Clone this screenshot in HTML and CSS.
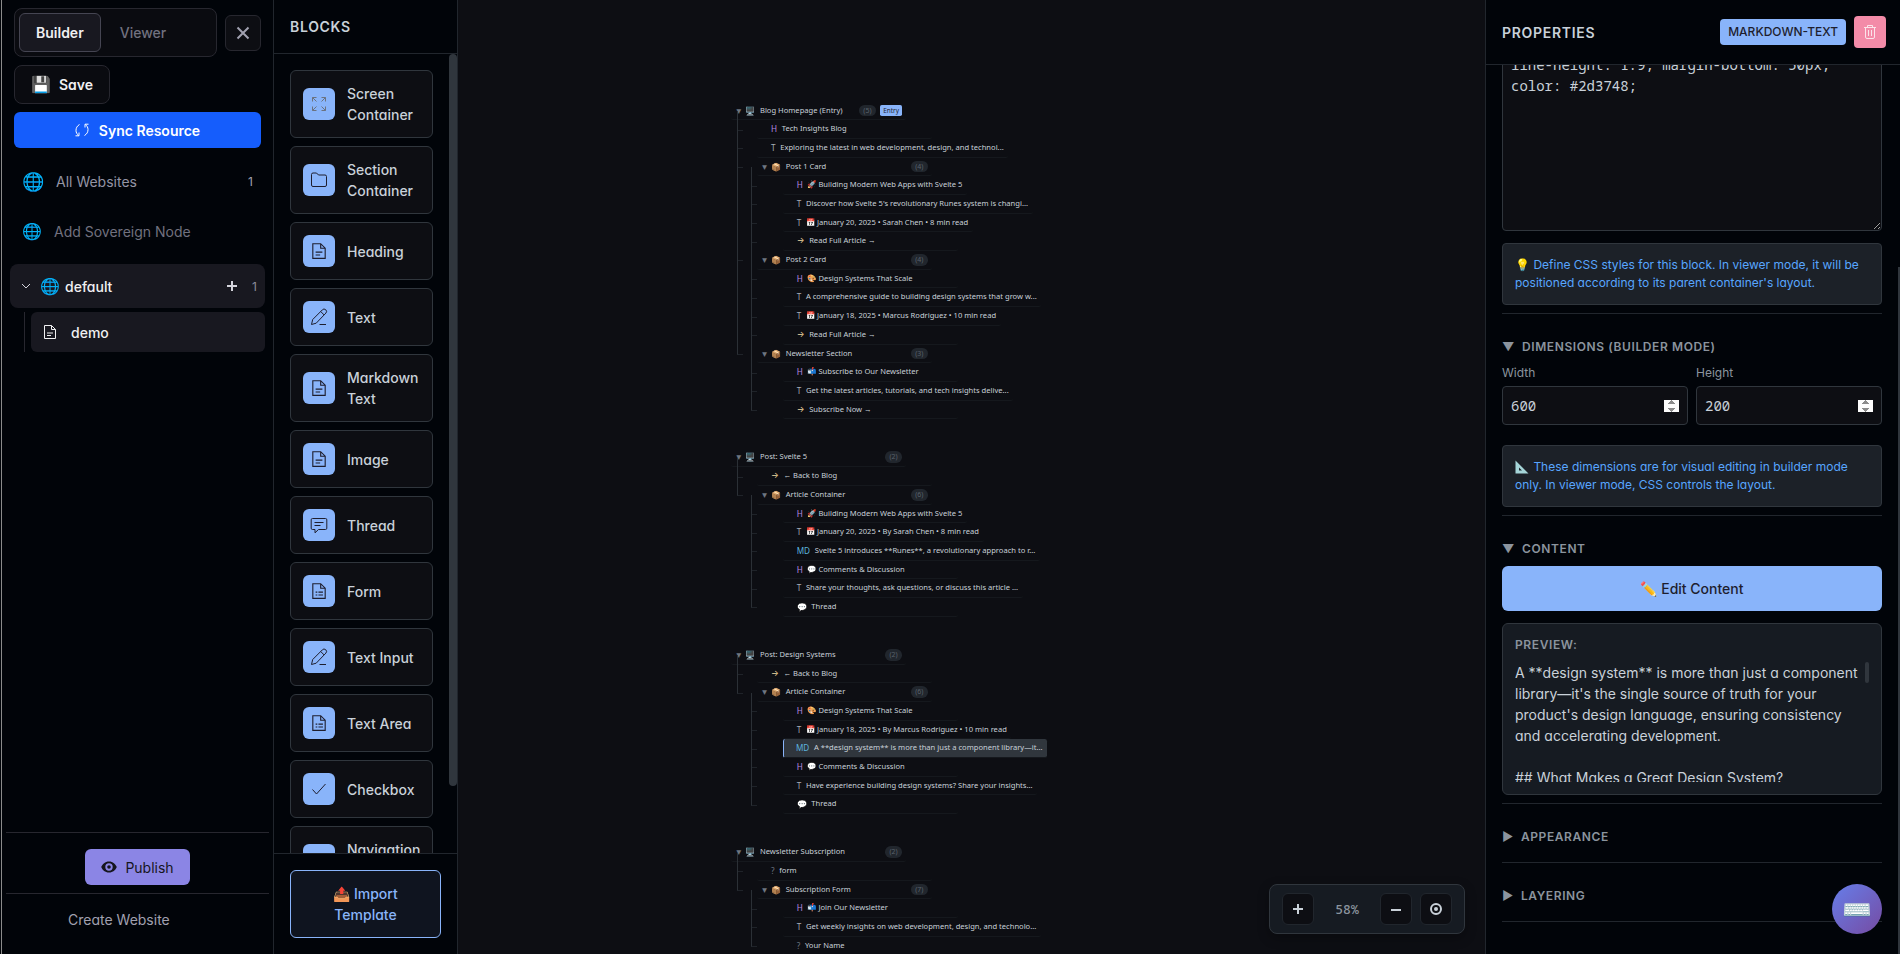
FILE: index.html
```html
<!DOCTYPE html>
<html lang="en">
<head>
  <meta charset="UTF-8" />
  <meta name="viewport" content="width=device-width, initial-scale=1.0"/>
  <title>Website Builder</title>
  <link rel="stylesheet" href="styles.css">
</head>
<body>

<svg class="sprite" aria-hidden="true">
  <symbol id="i-doc" viewBox="0 0 16 16"><path d="M2.5 1.5h7l4 4v9h-11zM9.5 1.5v4h4M5 9h6M5 11.5h4"/></symbol>
  <symbol id="i-form" viewBox="0 0 16 16"><path d="M2.5 1.5h7l4 4v9h-11zM9.5 1.5v4h4M5 9h1.5M7.5 9h4M5 11.5h1.5M7.5 11.5h4"/></symbol>
  <symbol id="i-expand" viewBox="0 0 16 16"><path d="M1.5 5.500v-4h4M1.500 1.500l4 4M10.500 1.500h4v4M14.500 1.500l-4 4M1.500 10.500v4h4M1.500 14.500l4-4M10.500 14.500h4v-4M14.500 14.500l-4-4"/></symbol>
  <symbol id="i-folder" viewBox="0 0 18 16"><path d="M1.500 13V2.500a1.500 1.500 0 0 1 1.500-1.500h3.500l2 2H15a1.500 1.500 0 0 1 1.500 1.500V13a1.500 1.500 0 0 1-1.500 1.500H3A1.500 1.500 0 0 1 1.500 13z"/></symbol>
  <symbol id="i-pen" viewBox="0 0 18 18"><path d="M1.500 16.500l1.200-5L12.300 1.900a2.300 2.300 0 0 1 3.600 3.200L6.200 15.200zM10.800 3.600l3.400 3.400M9.500 16.500H16"/></symbol>
  <symbol id="i-chat" viewBox="0 0 18 17"><path d="M2.500 1.500h13a1.300 1.300 0 0 1 1.300 1.300v8.400a1.300 1.300 0 0 1-1.300 1.300H8.500L5 15.800v-3.300H2.500a1.300 1.300 0 0 1-1.300-1.300V2.800a1.300 1.300 0 0 1 1.300-1.300zM4.500 5.500h9M4.500 8.500h6"/></symbol>
  <symbol id="i-check" viewBox="0 0 16 16"><path d="M1.500 8.500l4 4.500L14.500 3"/></symbol>
</svg>

<div class="app">

  <aside class="sidebar">
    <div class="topbar">
      <div class="modes">
        <button class="active">Builder</button>
        <button>Viewer</button>
      </div>
      <button class="close" aria-label="Close">
        <svg width="14" height="14" viewBox="0 0 14 14"><path d="M1.500 1.500l11 11M12.500 1.500l-11 11"/></svg>
      </button>
    </div>
    <button class="save"><span class="emoji">💾</span>Save</button>
    <button class="sync">
      <svg width="14" height="14" viewBox="0 0 14 14"><path d="M4.500 1.500C2 3 1 5 1 7.500c0 2 1 3.500 2.500 5M.500 12.800h3.500V9.500M9.500 12.500C12 11 13 9 13 6.500c0-2-1-3.500-2.500-5M13.500 1.200H10v3.300"/></svg>
      Sync Resource
    </button>

    <nav class="sites">
      <a href="#" class="site all"><span class="globe">🌐</span>All Websites<span class="num">1</span></a>
      <a href="#" class="site add"><span class="globe">🌐</span>Add Sovereign Node</a>
      <div class="site-root">
        <svg width="10" height="6" viewBox="0 0 10 6"><path d="M1 1l4 4 4-4"/></svg>
        <span class="globe">🌐</span>
        <a href="#">default</a>
        <button aria-label="Add page"><svg width="12" height="12" viewBox="0 0 12 12"><path d="M6 1v10M1 6h10"/></svg></button>
        <span class="num">1</span>
      </div>
      <div class="pages">
        <a href="#" class="page"><svg width="16" height="16"><use href="#i-doc"/></svg>demo</a>
      </div>
    </nav>

    <div class="side-foot">
      <div class="publish-row">
        <button class="publish">
          <svg width="16" height="12" viewBox="0 0 16 12"><path fill-rule="evenodd" d="M8 .500c4 0 6.500 2.500 7.800 5.500C14.500 9 12 11.500 8 11.500S1.500 9 .200 6C1.500 3 4 .500 8 .500zM8 2.300a3.700 3.700 0 1 0 0 7.400 3.700 3.700 0 0 0 0-7.400zM8 4.200a1.800 1.800 0 1 1 0 3.600 1.800 1.800 0 0 1 0-3.600z"/></svg>
          Publish
        </button>
      </div>
      <a href="#" class="create">Create Website</a>
    </div>
  </aside>

  <section class="blocks">
    <h2>Blocks</h2>
    <div class="block-area">
      <div class="block-list">
        <button class="block"><span class="tile faded"><svg width="16" height="16"><use href="#i-expand"/></svg></span>Screen Container</button>
        <button class="block"><span class="tile"><svg width="18" height="16"><use href="#i-folder"/></svg></span>Section Container</button>
        <button class="block"><span class="tile"><svg width="18" height="18"><use href="#i-doc"/></svg></span>Heading</button>
        <button class="block"><span class="tile"><svg width="18" height="18"><use href="#i-pen"/></svg></span>Text</button>
        <button class="block"><span class="tile"><svg width="18" height="18"><use href="#i-doc"/></svg></span>Markdown Text</button>
        <button class="block"><span class="tile"><svg width="18" height="18"><use href="#i-doc"/></svg></span>Image</button>
        <button class="block"><span class="tile"><svg width="18" height="17"><use href="#i-chat"/></svg></span>Thread</button>
        <button class="block"><span class="tile"><svg width="18" height="18"><use href="#i-form"/></svg></span>Form</button>
        <button class="block"><span class="tile"><svg width="18" height="18"><use href="#i-pen"/></svg></span>Text Input</button>
        <button class="block"><span class="tile"><svg width="18" height="18"><use href="#i-form"/></svg></span>Text Area</button>
        <button class="block"><span class="tile"><svg width="16" height="16"><use href="#i-check"/></svg></span>Checkbox</button>
        <button class="block"><span class="tile"></span>Navigation Menu</button>
      </div>
      <div class="thumb"></div>
    </div>
    <div class="import">
      <button>📤 Import Template</button>
    </div>
  </section>

  <main class="canvas">
    <div class="tree">
      <ul class="screen">
        <li>
          <div class="row"><i class="tw">▼</i><span class="ic">🖥️</span><span class="name">Blog Homepage (Entry)</span><span class="count">(5)</span><span class="entry">Entry</span></div>
          <ul>
            <li><div class="row leaf"><span class="ic h">H</span>Tech Insights Blog</div></li>
            <li><div class="row leaf"><span class="ic">T</span>Exploring the latest in web development, design, and technol...</div></li>
            <li>
              <div class="row"><i class="tw">▼</i><span class="ic">📦</span><span class="name">Post 1 Card</span><span class="count">(4)</span></div>
              <ul>
                <li><div class="row leaf"><span class="ic h">H</span>🚀 Building Modern Web Apps with Svelte 5</div></li>
                <li><div class="row leaf"><span class="ic">T</span>Discover how Svelte 5's revolutionary Runes system is changi...</div></li>
                <li><div class="row leaf"><span class="ic">T</span>📅 January 20, 2025 • Sarah Chen • 8 min read</div></li>
                <li><div class="row leaf"><span class="ic b">→</span>Read Full Article →</div></li>
              </ul>
            </li>
            <li>
              <div class="row"><i class="tw">▼</i><span class="ic">📦</span><span class="name">Post 2 Card</span><span class="count">(4)</span></div>
              <ul>
                <li><div class="row leaf"><span class="ic h">H</span>🎨 Design Systems That Scale</div></li>
                <li><div class="row leaf"><span class="ic">T</span>A comprehensive guide to building design systems that grow w...</div></li>
                <li><div class="row leaf"><span class="ic">T</span>📅 January 18, 2025 • Marcus Rodriguez • 10 min read</div></li>
                <li><div class="row leaf"><span class="ic b">→</span>Read Full Article →</div></li>
              </ul>
            </li>
            <li>
              <div class="row"><i class="tw">▼</i><span class="ic">📦</span><span class="name">Newsletter Section</span><span class="count">(3)</span></div>
              <ul>
                <li><div class="row leaf"><span class="ic h">H</span>📬 Subscribe to Our Newsletter</div></li>
                <li><div class="row leaf"><span class="ic">T</span>Get the latest articles, tutorials, and tech insights delive...</div></li>
                <li><div class="row leaf"><span class="ic b">→</span>Subscribe Now →</div></li>
              </ul>
            </li>
          </ul>
        </li>
      </ul>

      <ul class="screen">
        <li>
          <div class="row"><i class="tw">▼</i><span class="ic">🖥️</span><span class="name">Post: Svelte 5</span><span class="count">(2)</span></div>
          <ul>
            <li><div class="row leaf"><span class="ic b">→</span>← Back to Blog</div></li>
            <li>
              <div class="row"><i class="tw">▼</i><span class="ic">📦</span><span class="name">Article Container</span><span class="count">(6)</span></div>
              <ul>
                <li><div class="row leaf"><span class="ic h">H</span>🚀 Building Modern Web Apps with Svelte 5</div></li>
                <li><div class="row leaf"><span class="ic">T</span>📅 January 20, 2025 • By Sarah Chen • 8 min read</div></li>
                <li><div class="row leaf"><span class="ic md">MD</span>Svelte 5 introduces **Runes**, a revolutionary approach to r...</div></li>
                <li><div class="row leaf"><span class="ic h">H</span>💬 Comments &amp; Discussion</div></li>
                <li><div class="row leaf"><span class="ic">T</span>Share your thoughts, ask questions, or discuss this article ...</div></li>
                <li><div class="row leaf"><span class="ic">💬</span>Thread</div></li>
              </ul>
            </li>
          </ul>
        </li>
      </ul>

      <ul class="screen">
        <li>
          <div class="row"><i class="tw">▼</i><span class="ic">🖥️</span><span class="name">Post: Design Systems</span><span class="count">(2)</span></div>
          <ul>
            <li><div class="row leaf"><span class="ic b">→</span>← Back to Blog</div></li>
            <li>
              <div class="row"><i class="tw">▼</i><span class="ic">📦</span><span class="name">Article Container</span><span class="count">(6)</span></div>
              <ul>
                <li><div class="row leaf"><span class="ic h">H</span>🎨 Design Systems That Scale</div></li>
                <li><div class="row leaf"><span class="ic">T</span>📅 January 18, 2025 • By Marcus Rodriguez • 10 min read</div></li>
                <li><div class="row leaf selected"><span class="ic md">MD</span>A **design system** is more than just a component library—it...</div></li>
                <li><div class="row leaf"><span class="ic h">H</span>💬 Comments &amp; Discussion</div></li>
                <li><div class="row leaf"><span class="ic">T</span>Have experience building design systems? Share your insights...</div></li>
                <li><div class="row leaf"><span class="ic">💬</span>Thread</div></li>
              </ul>
            </li>
          </ul>
        </li>
      </ul>

      <ul class="screen">
        <li>
          <div class="row"><i class="tw">▼</i><span class="ic">🖥️</span><span class="name">Newsletter Subscription</span><span class="count">(2)</span></div>
          <ul>
            <li><div class="row leaf"><span class="ic q">?</span>form</div></li>
            <li>
              <div class="row"><i class="tw">▼</i><span class="ic">📦</span><span class="name">Subscription Form</span><span class="count">(7)</span></div>
              <ul>
                <li><div class="row leaf"><span class="ic h">H</span>📬 Join Our Newsletter</div></li>
                <li><div class="row leaf"><span class="ic">T</span>Get weekly insights on web development, design, and technolo...</div></li>
                <li><div class="row leaf"><span class="ic q">?</span>Your Name</div></li>
              </ul>
            </li>
          </ul>
        </li>
      </ul>
    </div>

    <div class="zoom-bar">
      <button aria-label="Zoom in"><svg width="10" height="10" viewBox="0 0 10 10"><path d="M5 0v10M0 5h10"/></svg></button>
      <span>58%</span>
      <button aria-label="Zoom out"><svg width="10" height="10" viewBox="0 0 10 10"><path d="M0 6h10"/></svg></button>
      <button aria-label="Fit to screen"><svg width="12" height="12" viewBox="0 0 12 12"><circle cx="6" cy="6" r="5"/><circle class="dot" cx="6" cy="6" r="2"/></svg></button>
    </div>
  </main>

  <aside class="props">
    <header>
      <h2>Properties</h2>
      <span class="tag">MARKDOWN-TEXT</span>
      <button class="delete" aria-label="Delete block">
        <svg width="14" height="16" viewBox="0 0 14 16"><path d="M1 3.500h12M4.500 3.500V1.500h5v2M2.500 3.500v9.500a1.500 1.500 0 0 0 1.500 1.500h6a1.500 1.500 0 0 0 1.500-1.500V3.500M5.500 6v6M8.500 6v6"/></svg>
      </button>
    </header>

    <div class="props-body">
      <div class="css-block">
        <textarea aria-label="Custom CSS" spellcheck="false">line-height: 1.9; margin-bottom: 50px;
color: #2d3748;</textarea>
        <p class="hint">💡 Define CSS styles for this block. In viewer mode, it will be positioned according to its parent container's layout.</p>
      </div>

      <details open>
        <summary>Dimensions (Builder Mode)</summary>
        <div class="dims">
          <label>Width<input type="number" value="600"></label>
          <label>Height<input type="number" value="200"></label>
        </div>
        <p class="hint"><svg class="ruler" width="14" height="14" viewBox="0 0 14 14"><path fill-rule="evenodd" d="M.500.500v13h13zM4 7.500v3h3z"/></svg> These dimensions are for visual editing in builder mode only. In viewer mode, CSS controls the layout.</p>
      </details>

      <details open>
        <summary>Content</summary>
        <button class="edit">✏️ Edit Content</button>
        <div class="preview">
          <h4>Preview:</h4>
          <div class="preview-text">A **design system** is more than just a component library—it's the single source of truth for your product's design language, ensuring consistency and accelerating development.

## What Makes a Great Design System?</div>
        </div>
      </details>

      <details>
        <summary>Appearance</summary>
      </details>

      <details>
        <summary>Layering</summary>
      </details>
    </div>
    <div class="thumb"></div>
    <button class="fab" aria-label="Keyboard shortcuts">⌨️</button>
  </aside>

</div>

</body>
</html>
```

FILE: styles.css
```css
* { margin: 0; padding: 0; box-sizing: border-box; }
body {
  font-family: Inter, sans-serif; font-size: 14px; line-height: 21px;
  font-feature-settings: 'cv11'; background: #010409; color: #c9d1d9;
}
button, input, textarea { font: inherit; font-feature-settings: inherit; color: inherit; cursor: pointer; }
a { color: inherit; text-decoration: none; }
ul { list-style: none; }
h2 { font-size: 14px; font-weight: 600; letter-spacing: 0.05em; text-transform: uppercase; }
svg { fill: none; stroke: currentColor; flex: none; }
.sprite { position: absolute; width: 0; height: 0; }

.app {
  display: grid; grid-template-columns: 272px 184px minmax(0, 1fr) 415px;
  height: 100vh; overflow: hidden; margin-left: 1px; border-left: 1px solid #8b8b8b;
}

/* sidebar */
.sidebar { display: flex; flex-direction: column; border-right: 1px solid #21262d; padding-top: 8px; }
.topbar { display: flex; align-items: center; gap: 8px; padding: 0 12px; }
.modes { flex: 1; display: flex; gap: 2px; padding: 4px; border: 1px solid #27272f; border-radius: 8px; background: #0a0b10; }
.modes button {
  padding: 8px 16px; height: 39px; border: 1px solid transparent; border-radius: 6px;
  background: none; color: #71717f; font-weight: 500;
}
.modes .active { background: #181820; border-color: #454552; color: #f0f0f2; font-weight: 600; }
.close {
  width: 36px; height: 36px; border: 1px solid #27272f; border-radius: 6px;
  background: #0d0e13; color: #a1a1b0; display: grid; place-items: center;
}
.close svg { stroke-width: 2; }
.save {
  align-self: flex-start; display: flex; align-items: center; gap: 8px; height: 39px; margin: 8px 12px;
  padding: 0 16px; border: 1px solid #27272f; border-radius: 8px; background: #0a0b10; color: #f0f0f2; font-weight: 600;
}
.save .emoji { font-size: 16px; }
.sync {
  display: flex; align-items: center; justify-content: center; gap: 10px; height: 36px; margin: 0 12px;
  border: none; border-radius: 6px; background: #155dfc; color: #fff; font-weight: 600;
}
.globe { font-size: 16px; }
.sites { flex: 1; padding: 8px 8px 0; }
.site { display: flex; align-items: center; height: 50px; padding: 0 12px; color: #9494a4; }
.all .globe { font-size: 18px; margin-right: 12px; }
.add { color: #71717f; margin-bottom: 8px; }
.add .globe { margin-right: 12px; }
.num { margin-left: auto; font-size: 12px; color: #a1a1b0; }
.site-root { display: flex; align-items: center; height: 44px; padding: 0 8px 0 11px; border-radius: 8px; background: #181820; color: #d4d4dc; }
.site-root .globe { margin: 0 5px 0 9px; }
.site-root a { flex: 1; font-weight: 500; color: #f0f0f2; }
.site-root button { border: none; background: none; display: grid; margin-right: 14px; }
.site-root .num { margin: 0; color: #8b8b9b; }
.site-root button svg { stroke-width: 2; }
.pages { margin: 4px 0 0 14px; border-left: 1px solid #27272f; padding-left: 6px; }
.page {
  display: flex; align-items: center; gap: 13px; height: 40px; padding-left: 11px;
  border-radius: 6px; background: #181820; color: #f0f0f2; font-weight: 500;
}
.side-foot { margin: 0 4px; }
.publish-row { display: flex; justify-content: center; padding: 16px 0 8px; border-top: 1px solid #27272f; }
.publish {
  display: flex; align-items: center; gap: 8px; height: 36px; padding: 0 16px;
  border: none; border-radius: 6px; background: #8b85e5; color: #16161e;
}
.publish svg { fill: currentColor; stroke: none; }
.create { display: block; padding: 15px 62px 24px; border-top: 1px solid #27272f; color: #a1a1b0; }

/* blocks */
.blocks { display: flex; flex-direction: column; min-height: 0; border-right: 1px solid #21262d; }
.blocks h2 { padding: 16px; border-bottom: 1px solid #21262d; }
.block-area { flex: 1; min-height: 0; position: relative; overflow: hidden; }
.block-list { display: flex; flex-direction: column; gap: 8px; padding: 16px 24px 0 16px; }
.block {
  display: flex; align-items: center; gap: 12px; padding: 12px; text-align: left;
  border: 1px solid #30363d; border-radius: 6px; background: #0d0e13; font-weight: 500;
}
.tile {
  flex: none; width: 32px; height: 32px; border-radius: 6px; background: #89b4fa;
  color: #1e1e2e; display: grid; place-items: center;
}
.tile.faded { color: #6b7280; }
.thumb { position: absolute; right: 0; background: #30363d; border-radius: 4px; }
.block-area .thumb { top: 0; width: 8px; height: 91.6%; }
.import { padding: 16px; border-top: 1px solid #21262d; }
.import button {
  width: 100%; padding: 12px 32px; border: 1px solid #89b4fa; border-radius: 6px;
  background: #0f141f; color: #89b4fa; font-weight: 500;
}

/* canvas: the tree is laid out at 100% and shown at the current zoom level */
.canvas { position: relative; overflow: hidden; background: #0d0e13; }
.tree {
  zoom: 0.584; display: flex; flex-direction: column; gap: 50px; padding: 174px 0 0 468px;
  font: 13px/20px "Noto Sans", sans-serif; white-space: nowrap;
}
.tree li { position: relative; }
.tree li ul { margin-left: 44px; }
.row {
  display: flex; align-items: center; gap: 8px; width: max-content; min-width: 300px; height: 32px;
  padding: 0 8px; border-bottom: 1px solid #15181d; border-radius: 4px;
}
.leaf { padding-left: 24px; padding-right: 8px; }
.tw { width: 10px; margin-left: -2px; font-size: 14px; font-style: normal; color: #6e7681; }
.ic { font-size: 14px; color: #a5adb6; }
.ic.h { color: #b48ce0; }
.ic.b { font-family: Inter, sans-serif; color: #f0d9a0; }
.ic.md { color: #5cb3dd; }
.ic.q { color: #6e7681; }
.name { flex: 1; }
.count { padding: 0 7px; border-radius: 10px; background: #21262d; color: #5a626c; font-size: 12px; }
.entry { padding: 0 5px; border-radius: 3px; background: #89b4fa; color: #1e1e2e; font-size: 11px; }
.selected { background: #30363d; border-left: 3px solid #89b4fa; padding-left: 21px; }

.tree li li::before {
  content: ''; position: absolute; left: -35px; top: -16px; height: 32px; width: 10px;
  border-left: 1px solid #2b3036; border-bottom: 1px solid #1f2329;
}
.tree li li:not(:last-child)::after {
  content: ''; position: absolute; left: -35px; top: -16px; height: 100%; border-left: 1px solid #2b3036;
}
.tree li li li::before, .tree li li li:not(:last-child)::after { left: -55px; }
.tree li li:not(:last-child) li:last-child::after {
  content: ''; position: absolute; left: -55px; top: 16px; height: 32px; border-left: 1px solid #2b3036;
}

.zoom-bar {
  position: absolute; right: 20px; bottom: 20px; display: flex; align-items: center; gap: 8px;
  padding: 8px 12px; border: 1px solid #30363d; border-radius: 8px; background: #161b22;
  box-shadow: 0 4px 12px rgba(0,0,0,0.3);
}
.zoom-bar button {
  width: 32px; height: 32px; border: 1px solid #21262d; border-radius: 6px;
  background: #0d0e13; display: grid; place-items: center;
}
.zoom-bar svg { stroke-width: 2; }
.zoom-bar .dot { fill: currentColor; stroke: none; }
.zoom-bar span { width: 50px; text-align: center; font: 500 13px/18px "Noto Sans Mono", "DejaVu Sans Mono", monospace; color: #8b949e; }

/* properties */
.props { position: relative; display: flex; flex-direction: column; min-height: 0; border-left: 1px solid #21262d; }
.props header { display: flex; align-items: center; gap: 8px; padding: 16px 14px 16px 16px; border-bottom: 1px solid #21262d; }
.props header h2 { flex: 1; }
.tag { padding: 4px 8px; border-radius: 4px; background: #89b4fa; color: #1e1e2e; font-size: 12px; line-height: 18px; font-weight: 500; }
.delete { width: 32px; height: 32px; border: none; border-radius: 4px; background: #f38ba8; color: #fbe4ea; display: grid; place-items: center; }
.props-body { flex: 1; min-height: 0; overflow: hidden; padding: 0 18px 0 16px; }
.css-block { margin-top: -20px; padding-bottom: 8px; border-bottom: 1px solid #21262d; }
textarea, input {
  display: block; width: 100%; padding: 8px; border: 1px solid #30363d; border-radius: 4px;
  background: #0d0e13; font: 14px/21px "Noto Sans Mono", "DejaVu Sans Mono", monospace;
}
textarea { height: 186px; margin-bottom: 12px; cursor: text; }
input { height: 39px; margin-top: 4px; }
input::-webkit-inner-spin-button { opacity: 1; height: 12px; align-self: center; }
.hint {
  padding: 12px; border: 1px solid #30363d; border-radius: 4px; background: #1c2128;
  color: #58a6ff; font-size: 12px; line-height: 18px;
}
.ruler { fill: #a5d5d8; stroke: none; vertical-align: -3px; margin-right: 1px; }
details { padding: 24px 0 16px; border-bottom: 1px solid #21262d; }
details[open] { padding-bottom: 8px; }
summary {
  list-style: none; color: #8b949e; font-size: 12px; line-height: 18px; font-weight: 600;
  letter-spacing: 0.05em; text-transform: uppercase; cursor: pointer;
}
summary::before { content: '▶'; margin-right: 7px; }
details[open] > summary { margin-bottom: 8px; }
details[open] > summary::before { content: '▼'; }
.dims { display: grid; grid-template-columns: 1fr 1fr; gap: 8px; margin-bottom: 20px; }
.dims label { color: #8b949e; font-size: 12px; line-height: 18px; }
.dims input { color: #c9d1d9; }
.edit { width: 100%; height: 45px; border: none; border-radius: 6px; background: #89b4fa; color: #1e1e2e; font-weight: 500; }
.preview { position: relative; margin-top: 12px; padding: 12px; border: 1px solid #30363d; border-radius: 6px; background: #161b22; }
.preview h4 { margin-bottom: 8px; color: #8b949e; font-size: 12px; line-height: 18px; font-weight: 600; letter-spacing: 0.05em; text-transform: uppercase; }
.preview-text { height: 120px; overflow: hidden; padding-right: 4px; white-space: pre-wrap; }
.preview::after { content: ''; position: absolute; right: 12px; top: 38px; width: 4px; height: 21px; border-radius: 2px; background: #30363d; }
.props > .thumb { top: 28%; bottom: 0; width: 2px; border-radius: 0; }
.fab {
  position: absolute; right: 18px; bottom: 20px; width: 50px; height: 50px; border: none; border-radius: 50%;
  background: linear-gradient(135deg, #667eea, #764ba2); color: #fff; font-size: 24px;
}
```
